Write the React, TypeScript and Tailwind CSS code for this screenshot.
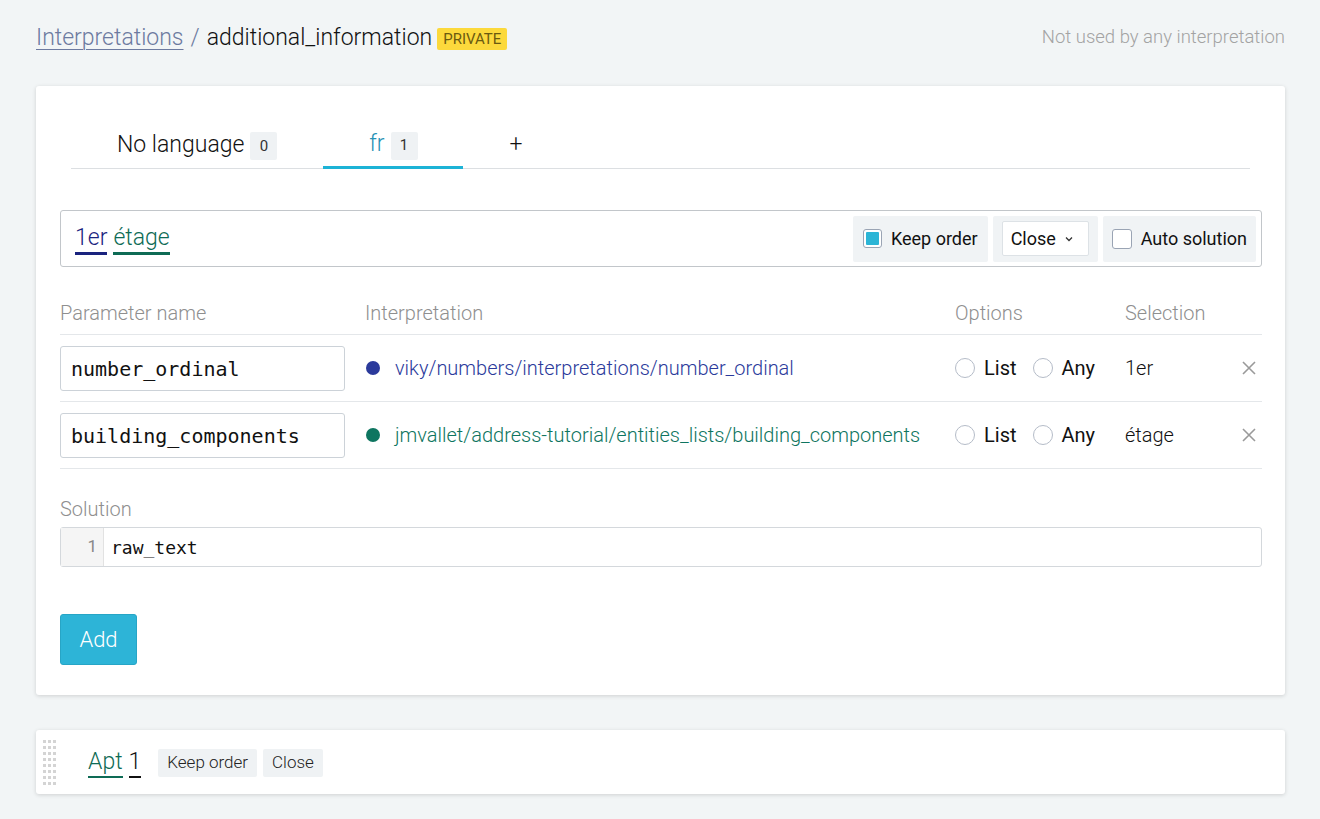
import React from "react";

const X = () => (
  <svg width="16" height="16" viewBox="0 0 16 16" className="text-[#9a9a9a]">
    <path d="M2 2 L14 14 M14 2 L2 14" stroke="currentColor" strokeWidth="1.6" fill="none" />
  </svg>
);

const Radio = ({ label }: { label: string }) => (
  <span className="flex items-center gap-[9px]">
    <span className="w-[20px] h-[20px] rounded-full border border-[#b5bcc8] bg-white" />
    <span className="text-[20px] text-[#111]">{label}</span>
  </span>
);

const Row = ({ name, color, link, sel }: { name: string; color: string; link: string; sel: string }) => (
  <div className="flex items-center h-[67px] border-b border-[#e4e7ea]">
    <div className="w-[305px]">
      <div className="w-[285px] h-[45px] border border-[#ccd2d8] rounded-[3px] bg-white flex items-center px-[10px] pt-[2px] text-[20px] text-[#111]" style={{ fontFamily: "'DejaVu Sans Mono', monospace" }}>
        {name}
      </div>
    </div>
    <div className="w-[590px] flex items-center gap-[15px] pl-[1px]">
      <span className="w-[14px] h-[14px] rounded-full" style={{ background: color }} />
      <span className="text-[20px] font-light" style={{ color }}>{link}</span>
    </div>
    <div className="w-[170px] flex items-center gap-[16px]">
      <Radio label="List" />
      <Radio label="Any" />
    </div>
    <div className="flex-1 text-[20px] font-light text-[#111]">{sel}</div>
    <div className="pr-[5px]"><X /></div>
  </div>
);

export default function App() {
  return (
    <div className="min-h-[819px] bg-[#f2f5f6] pl-[36px] pr-[35px] pt-[22px] pb-[26px]" style={{ fontFamily: "Roboto, 'Liberation Sans', sans-serif" }}>
      <div className="flex items-center justify-between h-[32px]">
        <div className="flex items-center text-[23px] font-light text-[#111]">
          <span className="text-[#6c7aa0] underline underline-offset-[4px] decoration-1">Interpretations</span>
          <span className="text-[#6c7aa0] mx-[7px]">/</span>
          <span>additional_information</span>
          <span className="ml-[5px] mt-[2px] bg-[#fcd93c] text-[#6b5a10] text-[15px] font-normal px-[6px] h-[22px] flex items-center rounded-[2px]">PRIVATE</span>
        </div>
        <div className="text-[18.5px] font-light text-[#a3a3a3]">Not used by any interpretation</div>
      </div>

      <div className="mt-[32px] bg-white rounded-[3px] shadow-[0_1px_4px_rgba(0,0,0,0.15)] pl-[24px] pr-[23px] pt-[30px] pb-[30px]">
        <div className="ml-[11px] mr-[12px] flex items-end border-b border-[#dcdfe2] h-[53px]">
          <div className="flex items-center gap-[6px] pl-[46px] pr-[46px] h-full pt-[6px]">
            <span className="text-[23px] font-light text-[#111]">No language</span>
            <span className="bg-[#eff2f4] text-[15px] text-[#333] w-[27px] h-[28px] flex items-center justify-center rounded-[2px] mt-[2px]">0</span>
          </div>
          <div className="flex items-center justify-center gap-[6px] w-[140px] h-full border-b-[3px] border-[#1db3d6] mb-[-1px] pt-[6px]">
            <span className="text-[23px] font-light text-[#2792b5]">fr</span>
            <span className="bg-[#eff2f4] text-[15px] text-[#333] w-[27px] h-[28px] flex items-center justify-center rounded-[2px] mt-[2px]">1</span>
          </div>
          <div className="h-full flex items-center pl-[46px] text-[23px] font-light text-[#111] pt-[6px]">+</div>
        </div>

        <div className="mt-[41px] h-[57px] border border-[#c2c6ca] rounded-[3px] flex items-center justify-between pl-[14px] pr-[5px]">
          <div className="text-[23px] font-light flex gap-[6px] mt-[2px]">
            <span className="text-[#1a237e] border-b-[3px] border-[#1a237e] leading-[28px]">1er</span>
            <span className="text-[#0e6b55] border-b-[3px] border-[#0e6b55] leading-[28px]">étage</span>
          </div>
          <div className="flex items-center gap-[5px] text-[18px] text-[#111]">
            <div className="bg-[#f0f3f5] h-[46px] px-[10px] flex items-center gap-[9px] rounded-[2px]">
              <span className="w-[19px] h-[19px] border border-[#9aa4b4] rounded-[3px] bg-white flex items-center justify-center">
                <span className="w-[13px] h-[13px] bg-[#2cb5d6] rounded-[1px]" />
              </span>
              <span>Keep order</span>
            </div>
            <div className="bg-[#f0f3f5] h-[46px] px-[9px] flex items-center rounded-[2px]">
              <div className="bg-white border border-[#dde2e6] rounded-[2px] h-[35px] w-[87px] px-[8px] flex items-center gap-[8px]">
                <span>Close</span>
                <svg width="10" height="10" viewBox="0 0 10 10"><path d="M2 3.5 L5 6.5 L8 3.5" stroke="#333" strokeWidth="1.3" fill="none" /></svg>
              </div>
            </div>
            <div className="bg-[#f0f3f5] h-[46px] px-[9px] flex items-center gap-[9px] rounded-[2px]">
              <span className="w-[20px] h-[20px] border border-[#9aa4b4] rounded-[3px] bg-white" />
              <span>Auto solution</span>
            </div>
          </div>
        </div>

        <div className="mt-[35px] flex items-center pb-[10px] border-b border-[#e4e7ea] text-[20px] leading-[22px] font-light text-[#8f8f8f]">
          <div className="w-[305px]">Parameter name</div>
          <div className="w-[590px]">Interpretation</div>
          <div className="w-[170px]">Options</div>
          <div>Selection</div>
        </div>
        <Row name="number_ordinal" color="#2b3a9b" link="viky/numbers/interpretations/number_ordinal" sel="1er" />
        <Row name="building_components" color="#0e7560" link="jmvallet/address-tutorial/entities_lists/building_components" sel="étage" />

        <div className="mt-[28px] text-[20px] leading-[24px] font-light text-[#8f8f8f]">Solution</div>
        <div className="mt-[6px] h-[40px] border border-[#d4d8dc] rounded-[3px] flex">
          <div className="w-[43px] bg-[#f5f5f5] border-r border-[#e2e2e2] flex items-center justify-end pr-[6px] text-[17px] text-[#888]">1</div>
          <div className="flex items-center pl-[7px] text-[18px] text-[#111]" style={{ fontFamily: "'DejaVu Sans Mono', monospace" }}>raw_text</div>
        </div>

        <button className="mt-[47px] w-[77px] h-[51px] bg-[#2db4d7] border border-[#27a5c6] rounded-[3px] text-white text-[22px] font-light">Add</button>
      </div>

      <div className="mt-[35px] bg-white rounded-[3px] shadow-[0_1px_4px_rgba(0,0,0,0.15)] h-[64px] flex items-center">
        <div className="ml-[7px] grid grid-cols-3 gap-x-[2px] gap-y-[3px]">
          {Array.from({ length: 24 }).map((_, i) => (
            <span key={i} className="w-[3px] h-[3px] bg-[#d4d4d4]" />
          ))}
        </div>
        <div className="ml-[32px] mt-[2px] flex items-center gap-[6px] text-[23px] font-light">
          <span className="text-[#0e6b55] border-b-[2px] border-[#0e6b55] leading-[28px]">Apt</span>
          <span className="text-[#111] border-b-[2px] border-[#111] leading-[28px]">1</span>
        </div>
        <div className="ml-[17px] mt-[2px] flex gap-[6px] text-[17px] font-light text-[#222]">
          <span className="bg-[#eff2f4] h-[28px] px-[9px] flex items-center rounded-[2px]">Keep order</span>
          <span className="bg-[#eff2f4] h-[28px] px-[9px] flex items-center rounded-[2px]">Close</span>
        </div>
      </div>
    </div>
  );
}
